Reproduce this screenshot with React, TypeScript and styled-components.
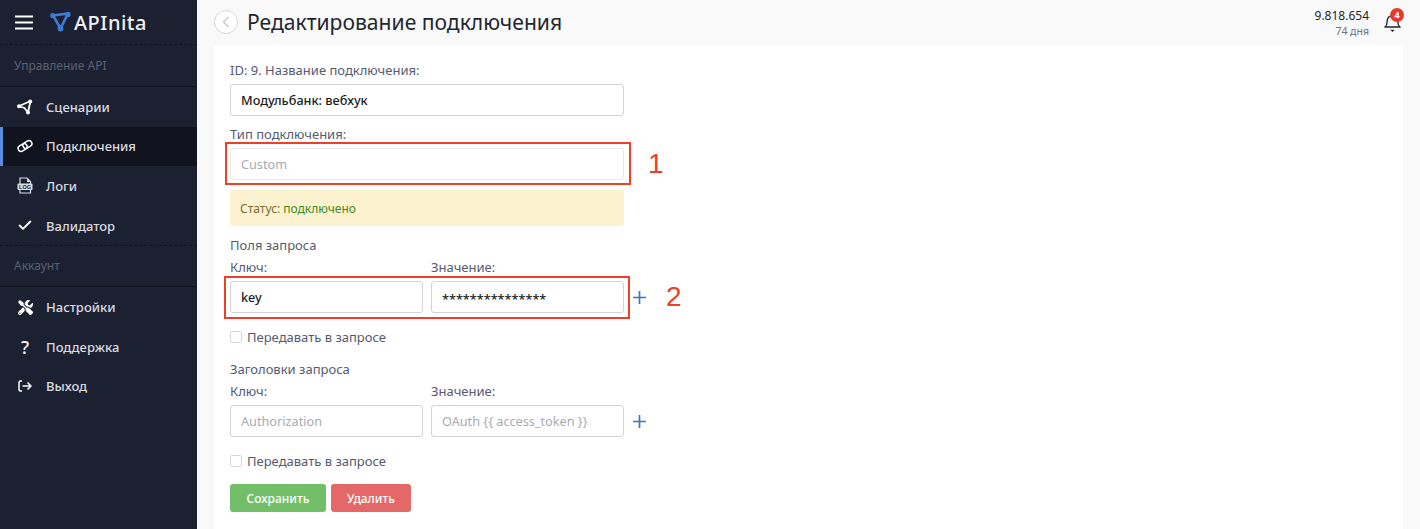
import React from "react";
import styled, { createGlobalStyle } from "styled-components";
import { FaTools } from "react-icons/fa";
import { Check } from "lucide-react";

const GlobalStyle = createGlobalStyle`
  html, body { margin: 0; padding: 0; height: 100%; }
  body { font-family: "Noto Sans", "Open Sans", sans-serif; background: #f9f9f9; overflow: hidden; }
  * { box-sizing: border-box; }
`;

const Page = styled.div`
  display: flex;
  width: 1420px;
  height: 529px;
  overflow: hidden;
`;

/* sidebar */
const Sidebar = styled.aside`
  width: 197px;
  flex: none;
  background: #1c2132;
  color: #dfe1e7;
`;
const Brand = styled.div`
  display: flex;
  align-items: center;
  height: 45px;
  padding-left: 15px;
  border-bottom: 1px dashed #12151f;
`;
const BrandName = styled.span`
  margin-left: 3px;
  font-size: 20px;
  font-weight: 500;
  letter-spacing: 0.5px;
  color: #f2f3f5;
`;
const MenuTitle = styled.div`
  height: 42px;
  padding: 12px 0 0 14px;
  font-size: 12px;
  line-height: 18px;
  color: #5b6070;
  border-bottom: 1px solid #12151f;
`;
const MenuList = styled.div<{ $divided?: boolean }>`
  display: flex;
  flex-direction: column;
  border-bottom: ${({ $divided }) => ($divided ? "1px dashed #12151f" : "none")};
  margin-bottom: ${({ $divided }) => ($divided ? "-1px" : "0")};
`;
const MenuItem = styled.div<{ $active?: boolean }>`
  display: flex;
  align-items: center;
  height: 39.6px;
  padding-left: ${({ $active }) => ($active ? "14px" : "17px")};
  font-size: 13px;
  font-weight: 500;
  color: #d9dbe1;
  background: ${({ $active }) => ($active ? "#11141f" : "transparent")};
  border-left: ${({ $active }) => ($active ? "3px solid #5b8ede" : "none")};
`;
const MenuIcon = styled.span`
  display: flex;
  justify-content: center;
  align-items: center;
  width: 16px;
  height: 18px;
  margin-right: 13px;
  color: #fff;
  font-size: 15px;
`;
const QuestionMark = styled.span`
  font-size: 18px;
  font-weight: 500;
  line-height: 18px;
  color: #fff;
`;

/* main */
const Main = styled.main`
  flex: 1;
  display: flex;
  flex-direction: column;
  padding-left: 17px;
  min-width: 0;
`;
const TopBar = styled.header`
  display: flex;
  align-items: center;
  height: 45px;
  padding-bottom: 2px;
  flex: none;
`;
const BackButton = styled.span`
  display: flex;
  align-items: center;
  justify-content: center;
  width: 24px;
  height: 24px;
  margin-right: 9px;
  border-radius: 50%;
  border: 1px solid #d6d7d9;
  background: #fff;
`;
const Title = styled.h1`
  margin: 0;
  font-size: 21.1px;
  font-weight: 400;
  color: #23262e;
`;
const Balance = styled.div`
  margin: 3px 15px 0 auto;
  text-align: right;
  font-size: 12px;
  line-height: 16px;
  color: #23262e;
`;
const BalanceDays = styled.div`
  font-size: 10.5px;
  line-height: 15px;
  color: #6c7280;
`;
const BellWrap = styled.div`
  position: relative;
  width: 17px;
  height: 20px;
  margin: 3px 19px 0 0;
`;
const BellBadge = styled.span`
  position: absolute;
  top: -5px;
  right: -3px;
  width: 14px;
  height: 14px;
  border-radius: 50%;
  background: #e8392c;
  color: #fff;
  font-size: 9px;
  font-weight: 700;
  line-height: 14px;
  text-align: center;
`;
const Card = styled.section`
  flex: 1;
  width: 1189px;
  padding: 16px 16px 0;
  background: #fff;
`;

/* form */
const Label = styled.div<{ $top?: number }>`
  font-size: 13px;
  line-height: 18px;
  color: #555b70;
  margin-top: ${({ $top }) => $top ?? 0}px;
`;
const Input = styled.div<{ $width?: number; $placeholder?: boolean; $muted?: boolean }>`
  display: flex;
  align-items: center;
  width: ${({ $width }) => $width ?? 394}px;
  height: 32px;
  margin-top: 5px;
  padding-left: 10px;
  border: 1px solid ${({ $muted }) => ($muted ? "#e8e8ea" : "#d2d3d6")};
  border-radius: 3px;
  background: #fff;
  font-size: 12.7px;
  font-weight: ${({ $placeholder }) => ($placeholder ? 400 : 500)};
  color: ${({ $placeholder }) => ($placeholder ? "#a9abb2" : "#1a1c22")};
`;
const Annotated = styled.div`
  position: relative;
  display: flow-root;
`;
const RedFrame = styled.div<{ $width: number; $height: number; $left: number; $top: number }>`
  position: absolute;
  left: ${({ $left }) => $left}px;
  top: ${({ $top }) => $top}px;
  width: ${({ $width }) => $width}px;
  height: ${({ $height }) => $height}px;
  border: 2px solid #ee4027;
`;
const RedNumber = styled.span<{ $left: number; $top: number }>`
  position: absolute;
  left: ${({ $left }) => $left}px;
  top: ${({ $top }) => $top}px;
  font-family: "Liberation Sans", Arial, sans-serif;
  font-size: 28px;
  line-height: 30px;
  color: #ee4027;
`;
const StatusBox = styled.div`
  display: flex;
  align-items: center;
  width: 394px;
  height: 36px;
  margin-top: 10px;
  padding-left: 10px;
  border-radius: 3px;
  background: #fdf2cf;
  font-size: 12px;
  color: #7d6a2c;
`;
const StatusValue = styled.span`
  margin-left: 3px;
  color: #3f8a1f;
`;
const PairLabels = styled.div<{ $top?: number }>`
  display: grid;
  grid-template-columns: 193px 193px;
  gap: 8px;
  margin-top: ${({ $top }) => $top ?? 0}px;
`;
const PairRow = styled.div`
  display: flex;
  align-items: center;
  gap: 8px;
`;
const Stars = styled.span`
  font-size: 12.7px;
  padding-top: 3px;
`;
const PlusIcon = styled.svg`
  margin: 5px 0 0 1px;
  flex: none;
`;
const CheckRow = styled.label<{ $top: number }>`
  display: flex;
  align-items: center;
  gap: 5px;
  height: 18px;
  margin-top: ${({ $top }) => $top}px;
  font-size: 13px;
  color: #555b70;
`;
const CheckBox = styled.span`
  width: 12px;
  height: 12px;
  border: 1px solid #d6d7da;
  border-radius: 2px;
  background: #fff;
`;
const Buttons = styled.div`
  display: flex;
  gap: 5px;
  margin-top: 14px;
`;
const Button = styled.button<{ $kind: "save" | "remove"; $width: number }>`
  width: ${({ $width }) => $width}px;
  height: 28px;
  padding: 0;
  border: none;
  border-radius: 3px;
  background: ${({ $kind }) => ($kind === "save" ? "#73bf69" : "#e46868")};
  color: #fff;
  font-family: inherit;
  font-size: 12px;
  font-weight: 500;
`;

const Plus = () => (
  <PlusIcon width="13" height="13" viewBox="0 0 13 13">
    <path d="M6.500 0v13M0 6.500h13" stroke="#3a73d0" strokeWidth="1.700" />
  </PlusIcon>
);

const BurgerIcon = () => (
  <svg width="18" height="15" viewBox="0 0 18 15" style={{ marginRight: 17 }}>
    <path d="M0 1.500h18M0 7.500h18M0 13.500h18" stroke="#fff" strokeWidth="2.200" />
  </svg>
);

const LogoIcon = () => (
  <svg width="21" height="20" viewBox="0 0 21 20">
    <path d="M3 3.500 L18 1.500 L10.500 16.500 Z" fill="none" stroke="#3d7bd6" strokeWidth="2.600" />
    <circle cx="2.800" cy="3.500" r="2.600" fill="#3d7bd6" />
    <circle cx="18" cy="2.500" r="2.600" fill="#3d7bd6" />
    <circle cx="10.500" cy="16.500" r="2.900" fill="#3d7bd6" />
  </svg>
);

const ScenarioIcon = () => (
  <svg width="16" height="16" viewBox="0 0 16 16">
    <path d="M1.800 7.200 L13.500 2 L11 13.500 L7.500 9 Z" fill="none" stroke="#fff" strokeWidth="1.800" strokeLinejoin="round" />
    <circle cx="13.200" cy="2.400" r="2" fill="#fff" />
    <circle cx="11" cy="13.400" r="2" fill="#fff" />
    <circle cx="2" cy="7.200" r="2" fill="#fff" />
  </svg>
);

const LinkIcon = () => (
  <svg width="17" height="14" viewBox="0 0 17 14">
    <g fill="none" stroke="#fff" strokeWidth="1.600" transform="rotate(-32 8.500 7)">
      <rect x="0.500" y="3.800" width="10" height="6.400" rx="3.200" />
      <rect x="6.500" y="3.800" width="10" height="6.400" rx="3.200" />
    </g>
  </svg>
);

const LogFileIcon = () => (
  <svg width="16" height="17" viewBox="0 0 16 17">
    <path d="M3 7V1h7l3.500 3.500V7M3 13v3h10.500v-3" fill="none" stroke="#d9dbe1" strokeWidth="1.200" />
    <path d="M10 1v4h3.500z" fill="#d9dbe1" />
    <rect x="0.500" y="6.500" width="15" height="6.500" rx="1" fill="#d9dbe1" />
    <text x="8" y="11.800" textAnchor="middle" fontSize="5.500" fontWeight="700" fill="#1c2132" fontFamily="Liberation Sans">LOG</text>
  </svg>
);

const ExitIcon = () => (
  <svg width="14" height="12" viewBox="0 0 14 12">
    <path d="M4 1H2.500Q1 1 1 2.500v7Q1 11 2.500 11H4" fill="none" stroke="#fff" strokeWidth="1.500" />
    <path d="M4.500 6h8.500M9.500 2.500 13 6l-3.500 3.500" fill="none" stroke="#fff" strokeWidth="1.500" />
  </svg>
);

const BackIcon = () => (
  <svg width="8" height="12" viewBox="0 0 8 12">
    <path d="M6.500 1 L1.500 6 L6.500 11" fill="none" stroke="#c4c5c9" strokeWidth="1.300" />
  </svg>
);

const BellIcon = () => (
  <svg width="17" height="20" viewBox="0 0 19 22">
    <path d="M1 15.500c2-1.500 2.500-3 2.500-6C3.500 5.500 6 3 9.500 3s6 2.500 6 6.500c0 3 .5 4.500 2.500 6z" fill="none" stroke="#23262e" strokeWidth="1.500" strokeLinejoin="round" />
    <path d="M7 18.500h5L9.500 21z" fill="#23262e" />
  </svg>
);

const App = () => {
  return (
    <Page>
      <GlobalStyle />
      <Sidebar>
        <Brand>
          <BurgerIcon />
          <LogoIcon />
          <BrandName>APInita</BrandName>
        </Brand>
        <MenuTitle>Управление API</MenuTitle>
        <MenuList $divided>
          <MenuItem>
            <MenuIcon><ScenarioIcon /></MenuIcon>Сценарии
          </MenuItem>
          <MenuItem $active>
            <MenuIcon><LinkIcon /></MenuIcon>Подключения
          </MenuItem>
          <MenuItem>
            <MenuIcon><LogFileIcon /></MenuIcon>Логи
          </MenuItem>
          <MenuItem>
            <MenuIcon><Check size={17} strokeWidth={2.8} /></MenuIcon>Валидатор
          </MenuItem>
        </MenuList>
        <MenuTitle>Аккаунт</MenuTitle>
        <MenuList>
          <MenuItem>
            <MenuIcon><FaTools size={15} /></MenuIcon>Настройки
          </MenuItem>
          <MenuItem>
            <MenuIcon><QuestionMark>?</QuestionMark></MenuIcon>Поддержка
          </MenuItem>
          <MenuItem>
            <MenuIcon><ExitIcon /></MenuIcon>Выход
          </MenuItem>
        </MenuList>
      </Sidebar>
      <Main>
        <TopBar>
          <BackButton><BackIcon /></BackButton>
          <Title>Редактирование подключения</Title>
          <Balance>
            9.818.654
            <BalanceDays>74 дня</BalanceDays>
          </Balance>
          <BellWrap>
            <BellIcon />
            <BellBadge>4</BellBadge>
          </BellWrap>
        </TopBar>
        <Card>
          <Label>ID: 9. Название подключения:</Label>
          <Input>Модульбанк: вебхук</Input>
          <Label $top={9}>Тип подключения:</Label>
          <Annotated>
            <Input $placeholder $muted>Custom</Input>
            <RedFrame $left={-5} $top={-1} $width={406} $height={43} />
            <RedNumber $left={418} $top={6}>1</RedNumber>
          </Annotated>
          <StatusBox>
            Статус:<StatusValue>подключено</StatusValue>
          </StatusBox>
          <Label $top={10}>Поля запроса</Label>
          <PairLabels $top={4}>
            <Label>Ключ:</Label>
            <Label>Значение:</Label>
          </PairLabels>
          <Annotated>
            <PairRow>
              <Input $width={193}>key</Input>
              <Input $width={193}><Stars>***************</Stars></Input>
              <Plus />
            </PairRow>
            <RedFrame $left={-6} $top={0} $width={406} $height={43} />
            <RedNumber $left={436} $top={6}>2</RedNumber>
          </Annotated>
          <CheckRow $top={15}>
            <CheckBox />
            Передавать в запросе
          </CheckRow>
          <Label $top={14}>Заголовки запроса</Label>
          <PairLabels $top={4}>
            <Label>Ключ:</Label>
            <Label>Значение:</Label>
          </PairLabels>
          <PairRow>
            <Input $width={193} $placeholder>Authorization</Input>
            <Input $width={193} $placeholder>{"OAuth {{ access_token }}"}</Input>
            <Plus />
          </PairRow>
          <CheckRow $top={15}>
            <CheckBox />
            Передавать в запросе
          </CheckRow>
          <Buttons>
            <Button $kind="save" $width={96}>Сохранить</Button>
            <Button $kind="remove" $width={80}>Удалить</Button>
          </Buttons>
        </Card>
      </Main>
    </Page>
  );
};

export default App;
